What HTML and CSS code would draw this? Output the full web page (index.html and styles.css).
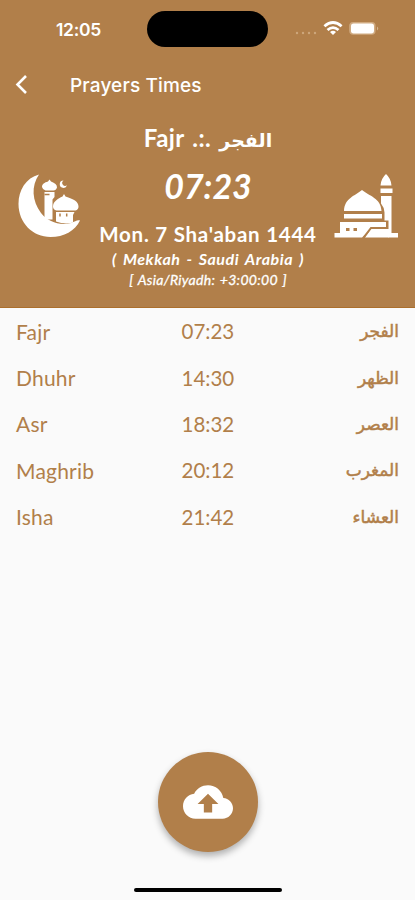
FILE: index.html
```
<!DOCTYPE html>
<html lang="en">
	<head>
		<meta charset="UTF-8">
		<meta name="viewport" content="width=device-width, initial-scale=1">
		<title>Prayers Times</title>
		<link rel="stylesheet" href="styles.css">
	</head>
	<body>
		<header>
			<div class="status">
				<span class="clock">12:05</span>
				<span class="island"></span>
				<svg class="indicators" width="90" height="20" viewBox="290 19 90 20">
					<g fill="#cda67b">
						<circle cx="297" cy="33" r="1.2"/>
						<circle cx="303" cy="33" r="1.2"/>
						<circle cx="309" cy="33" r="1.2"/>
						<circle cx="315" cy="33" r="1.2"/>
					</g>
					<g fill="none" stroke="#fff" stroke-width="2.8">
						<path d="M324.400 26.200Q333 18.900 341.600 26.200"/>
						<path d="M327.500 30Q333 25.300 338.500 30"/>
					</g>
					<path d="M330 32Q333 29.400 336 32L333 35z" fill="#fff"/>
					<rect x="349.200" y="22" width="26.400" height="12.800" rx="4" fill="#d0aa80"/>
					<rect x="351" y="23.600" width="23" height="9.800" rx="2.600" fill="#fff"/>
					<path d="M377 26.500q2.500 1.800 0 4z" fill="#d5b28c"/>
				</svg>
			</div>
			<nav>
				<svg class="back" width="14" height="22" viewBox="0 0 14 22">
					<path d="M12 2L3.500 10.500l8.500 8.500" fill="none" stroke="#fff" stroke-width="2.600"/>
				</svg>
				<h1>Prayers Times</h1>
			</nav>
			<section class="next">
				<svg class="art" width="64" height="66" viewBox="18 173 64 66" fill="#fff">
					<path d="M39 174.500C26 178 18.500 190 18.500 204C18.500 223 33 237 50.500 237C64 237 75 231 80 220.500C77.500 219.500 75 221.500 71 223C60 226 48 222 41 213C32 201 31 186 39 174.500z"/>
					<path d="M49.500 179.500l1.500 2c4 1.500 6 3 6 6q-1 3-3.500 3h-8q-3-1-3.500-3.500c0-3 2.500-4.500 6-5.500z"/>
					<path d="M44.500 192h10v5l-2 2.500v20h-8z"/>
					<path d="M63.500 180.500a3.700 3.700 0 1 0 3.500 4.800a2.700 2.700 0 1 1-3.500-4.800z"/>
					<path d="M64 194l1.500 2.500c8 2.500 13 5 13 10q0 3-3 4h-19q-3.500-1-3.500-4c0-5 5-8 9.500-10z"/>
					<path d="M56 212h18.500l-1.500 3v7.500q-8 2.500-17-1z"/>
					<path d="M44.500 194.500h5M60 213.500v3M66.700 213.500v3" fill="none" stroke="#b17f4a" stroke-width="1.500"/>
				</svg>
				<div class="names">Fajr .:. <span class="ar" lang="ar" dir="rtl">الفجر</span></div>
				<svg class="art right" width="64" height="66" viewBox="334 173 64 66" fill="#fff">
					<path d="M362 190C369 196 381 198 381.500 211h-37.500C344.500 198 355 196 362 190z"/>
					<path d="M344 214h38v4.500h-38zM340 222h46v7h-15l-9 8.500h-27.500v-4.500h5.500z"/>
					<path d="M371 229h18v8.500h-24z"/>
					<path d="M386 174q5 4.500 5.500 11.500h-11q.500-7 5.500-11.500zM380.500 188.500h12v4.500h-12zM381 196h10.500v37h6.500v4.500h-9.500v-17h-4v-8q-.500-5.500-3.500-9z"/>
					<path d="M346 229.500h3.500M353.500 229.500h3.500" fill="none" stroke="#b17f4a" stroke-width="3"/>
					<path d="M364 237l7-9h16" fill="none" stroke="#b17f4a" stroke-width="2"/>
				</svg>
				<div class="time">07:23</div>
				<div class="date">Mon. 7 Sha'aban 1444</div>
				<div class="place">( Mekkah - Saudi Arabia )</div>
				<div class="zone">[ Asia/Riyadh: +3:00:00 ]</div>
			</section>
		</header>
		<main>
			<ul>
				<li><span>Fajr</span><time>07:23</time><span class="ar" lang="ar" dir="rtl">الفجر</span></li>
				<li><span>Dhuhr</span><time>14:30</time><span class="ar" lang="ar" dir="rtl">الظهر</span></li>
				<li><span>Asr</span><time>18:32</time><span class="ar" lang="ar" dir="rtl">العصر</span></li>
				<li><span>Maghrib</span><time>20:12</time><span class="ar" lang="ar" dir="rtl">المغرب</span></li>
				<li><span>Isha</span><time>21:42</time><span class="ar" lang="ar" dir="rtl">العشاء</span></li>
			</ul>
		</main>
		<footer>
			<button aria-label="Upload">
				<svg width="50" height="50" viewBox="0 0 24 24" fill="#fff">
					<path d="M19.350 10.040C18.670 6.590 15.640 4 12 4 9.110 4 6.600 5.640 5.350 8.040 2.340 8.360 0 10.910 0 14c0 3.310 2.690 6 6 6h13c2.760 0 5-2.240 5-5 0-2.640-2.050-4.780-4.650-4.960zM14 13v4h-4v-4H7l5-5 5 5h-3z"/>
				</svg>
			</button>
			<div class="home"></div>
		</footer>
	</body>
</html>
```
FILE: styles.css
```
* {
	box-sizing: border-box;
}
body {
	margin: 0;
	height: 900px;
	display: flex;
	flex-direction: column;
	background: #fafafa;
	color: #b17f4a;
	font-family: Lato, "DejaVu Sans", sans-serif;
}
header {
	height: 308px;
	background: #b17f4a;
	border-bottom: 1px solid #ac6f2c;
	color: #fff;
}
.status {
	height: 58px;
	padding: 0 35px 0 56px;
	display: grid;
	grid-template-columns: 91px 121px 1fr;
	align-items: center;
}
.clock {
	font: 600 17.5px Inter, sans-serif;
	letter-spacing: -0.3px;
}
.island {
	height: 36px;
	border-radius: 18px;
	background: #000;
}
.indicators {
	justify-self: end;
}
nav {
	height: 54px;
	padding-left: 14px;
	display: flex;
	align-items: center;
}
h1 {
	margin: 0 0 0 42px;
	font: 500 19px Inter, sans-serif;
	letter-spacing: 0.15px;
}
.next {
	display: grid;
	grid-template-columns: 64px 1fr 64px;
	grid-template-rows: 51px 44px 40px 23px 19px;
	padding: 0 17px 0 18px;
	align-items: center;
	text-align: center;
	white-space: nowrap;
}
.next div {
	grid-column: 2;
	justify-self: center;
}
.art {
	grid-column: 1;
	grid-row: 1 / 4;
	align-self: start;
	margin-top: 61px;
}
.art.right {
	grid-column: 3;
}
.ar {
	font-family: "DejaVu Sans", sans-serif;
	font-weight: bold;
}
.names {
	grid-row: 1;
	font-size: 24px;
	font-weight: bold;
	word-spacing: 2px;
	letter-spacing: 0.4px;
}
.names .ar {
	font-size: 19px;
	letter-spacing: 0;
}
.time {
	grid-row: 2;
	font-size: 34px;
	font-weight: bold;
	font-style: italic;
}
.date {
	grid-row: 3;
	padding-top: 13px;
	font-size: 20.5px;
	font-weight: bold;
	letter-spacing: 0.75px;
}
.place {
	grid-row: 4;
	font-size: 16px;
	font-weight: bold;
	font-style: italic;
	letter-spacing: 0.55px;
	word-spacing: 2px;
}
.zone {
	grid-row: 5;
	font-size: 14px;
	font-style: italic;
	letter-spacing: 0.3px;
	word-spacing: 1px;
	-webkit-text-stroke: 0.3px #fff;
}
main {
	flex: 1;
}
ul {
	margin: 0;
	padding: 0 16px;
	list-style: none;
}
li {
	height: 46.4px;
	display: grid;
	grid-template-columns: 1fr 52px 1fr;
	align-items: center;
	font-size: 21px;
	letter-spacing: 0.2px;
}
time {
	font-size: 20.5px;
	letter-spacing: 0;
	text-align: center;
}
li .ar {
	font-size: 17px;
	font-weight: normal;
	letter-spacing: 0;
	-webkit-text-stroke: 0.5px #b17f4a;
}
footer {
	height: 148px;
	display: flex;
	flex-direction: column;
	align-items: center;
}
button {
	width: 100px;
	height: 100px;
	padding: 0;
	border: 0;
	border-radius: 50%;
	background: #b17f4a;
	box-shadow: 0 4px 7px rgba(0, 0, 0, 0.3);
	display: flex;
	align-items: center;
	justify-content: center;
}
.home {
	width: 148px;
	height: 4px;
	margin-top: 36px;
	border-radius: 2px;
	background: #000;
}
```
